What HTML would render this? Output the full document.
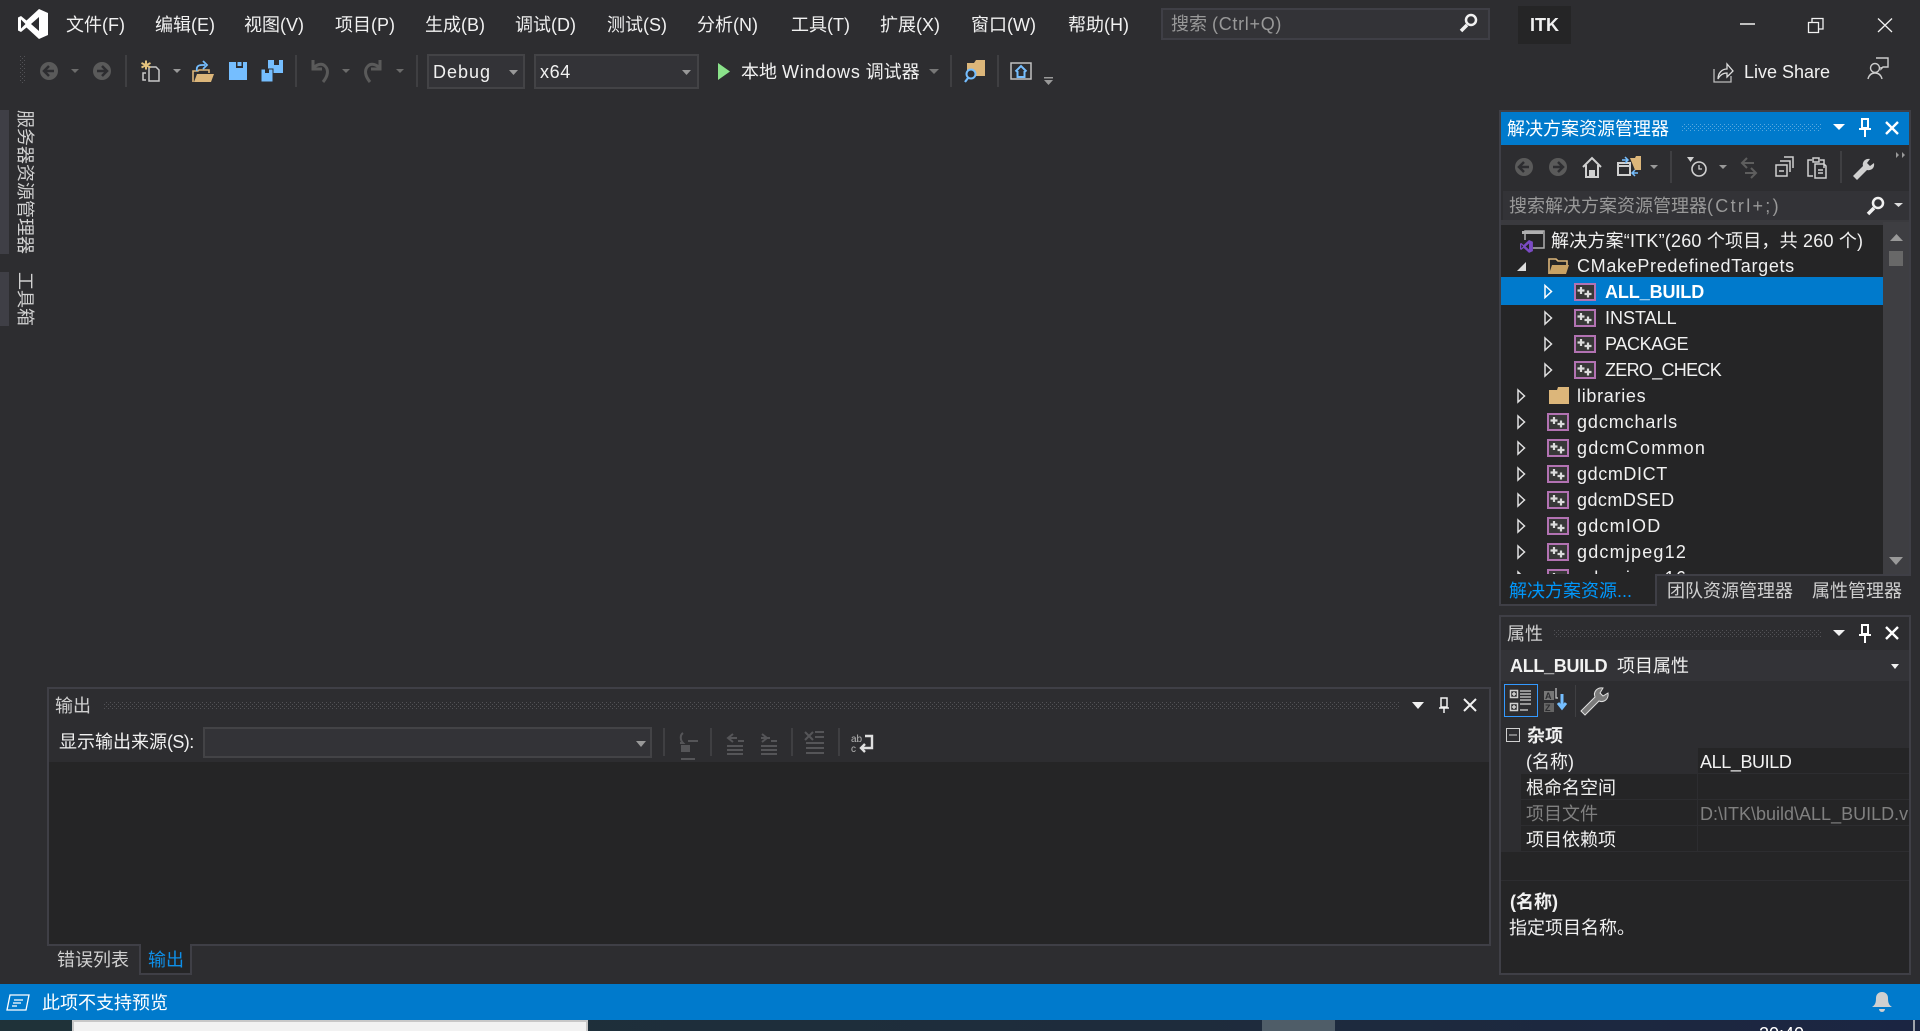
<!DOCTYPE html>
<html lang="zh-CN">
<head>
<meta charset="utf-8">
<title>ITK - Microsoft Visual Studio</title>
<style>
html,body{margin:0;padding:0;width:1920px;height:1031px;overflow:hidden;background:#2d2d30}
body{position:relative;font-family:"Liberation Sans","Noto Sans CJK SC",sans-serif;font-size:18px;color:#f1f1f1}
.b{position:absolute;box-sizing:border-box}
.t{position:absolute;line-height:26px;height:26px;white-space:nowrap;font-size:18px}
.g{color:#999}
.d{color:#d0d0d0}
.v{position:absolute;writing-mode:vertical-rl;text-orientation:sideways;font-size:18px;line-height:18px;white-space:nowrap;color:#d0d0d0;left:16px}
svg{position:absolute;left:0;top:0}
</style>
</head>
<body>
<!-- wallpaper strip -->
<div class="b" style="left:0;top:1020px;width:1920px;height:11px;background:linear-gradient(90deg,#1f3239,#1e2c3c 60%,#1b2542)"></div>
<div class="b" style="left:72px;top:1020px;width:516px;height:11px;background:#f2f2f2;border:2px solid #c8c8c8;border-bottom:0"></div>
<div class="b" style="left:1262px;top:1020px;width:73px;height:11px;background:#4f5d68"></div>
<div class="b" style="left:1913px;top:1020px;width:2px;height:11px;background:#a0a4ac"></div>
<div class="b" style="left:0;top:1020px;width:1920px;height:11px;overflow:hidden"><span class="t" style="left:1759px;top:1px;color:#fff;font-size:18px">20:40</span></div>

<!-- title search -->
<div class="b" style="left:1161px;top:8px;width:329px;height:32px;background:#333337;border:2px solid #3f3f46"></div>
<div class="b" style="left:1518px;top:6px;width:53px;height:38px;background:#252526"></div>
<!-- combos -->
<div class="b" style="left:427px;top:54px;width:98px;height:35px;background:#333337;border:2px solid #434346"></div>
<div class="b" style="left:534px;top:54px;width:165px;height:35px;background:#333337;border:2px solid #434346"></div>
<!-- left tabs -->
<div class="b" style="left:0;top:110px;width:9px;height:144px;background:#3f3f46"></div>
<div class="b" style="left:0;top:272px;width:9px;height:54px;background:#3f3f46"></div>

<!-- output panel -->
<div class="b" style="left:47px;top:687px;width:1444px;height:259px;background:#2d2d30;border:2px solid #3f3f46"></div>
<div class="b" style="left:49px;top:762px;width:1440px;height:182px;background:#252526"></div>
<div class="b" style="left:203px;top:727px;width:449px;height:31px;background:#333337;border:2px solid #434346"></div>
<div class="b" style="left:139px;top:944px;width:53px;height:31px;background:#252526;border:2px solid #3f3f46;border-top:0"></div>
<div class="b" style="left:141px;top:943px;width:49px;height:3px;background:#252526"></div>

<!-- solution explorer -->
<div class="b" style="left:1499px;top:110px;width:412px;height:496px;background:#2d2d30;border:2px solid #3f3f46"></div>
<div class="b" style="left:1501px;top:112px;width:408px;height:33px;background:#007acc"></div>
<div class="b" style="left:1503px;top:191px;width:388px;height:29px;background:#333337"></div>
<div class="b" style="left:1891px;top:191px;width:18px;height:29px;background:#333337"></div>
<div class="b" style="left:1501px;top:220px;width:408px;height:5px;background:#3a3a3e"></div>
<div class="b" style="left:1501px;top:225px;width:382px;height:349px;background:#252526"></div>
<div class="b" style="left:1883px;top:222px;width:26px;height:352px;background:#3e3e42"></div>
<div class="b" style="left:1889px;top:251px;width:14px;height:15px;background:#686868"></div>
<div class="b" style="left:1501px;top:277px;width:382px;height:28px;background:#007acc"></div>
<div class="b" style="left:1499px;top:574px;width:158px;height:32px;background:#252526;border:2px solid #3f3f46;border-top:0"></div>
<div class="b" style="left:1657px;top:574px;width:254px;height:2px;background:#3f3f46"></div>
<div class="b" style="left:1657px;top:576px;width:254px;height:30px;background:#2d2d30"></div>

<!-- properties panel -->
<div class="b" style="left:1499px;top:615px;width:412px;height:360px;background:#252526;border:2px solid #3f3f46"></div>
<div class="b" style="left:1501px;top:617px;width:408px;height:103px;background:#2d2d30"></div>
<div class="b" style="left:1501px;top:650px;width:408px;height:31px;background:#333337"></div>
<div class="b" style="left:1504px;top:684px;width:34px;height:33px;border:1px solid #3399ff;background:#2d2d30"></div>
<div class="b" style="left:1501px;top:720px;width:408px;height:28px;background:#2d2d30"></div>
<div class="b" style="left:1501px;top:748px;width:196px;height:26px;background:#2d2d30"></div>
<div class="b" style="left:1501px;top:774px;width:20px;height:77px;background:#2d2d30"></div>
<div class="b" style="left:1697px;top:748px;width:1px;height:103px;background:#2d2d30"></div>
<div class="b" style="left:1521px;top:773px;width:388px;height:1px;background:#2d2d30"></div>
<div class="b" style="left:1521px;top:799px;width:388px;height:1px;background:#2d2d30"></div>
<div class="b" style="left:1521px;top:825px;width:388px;height:1px;background:#2d2d30"></div>
<div class="b" style="left:1501px;top:851px;width:408px;height:1px;background:#2d2d30"></div>
<div class="b" style="left:1501px;top:880px;width:408px;height:1px;background:#2d2d30"></div>

<!-- status bar -->
<div class="b" style="left:0;top:984px;width:1920px;height:36px;background:#007acc"></div>

<svg width="1920" height="1031" viewBox="0 0 1920 1031" xmlns="http://www.w3.org/2000/svg">
<defs>
<pattern id="dot" width="4" height="4" patternUnits="userSpaceOnUse"><rect width="1" height="1" fill="#525256"/><rect x="2" y="2" width="1" height="1" fill="#525256"/></pattern>
<pattern id="dotb" width="4" height="4" patternUnits="userSpaceOnUse"><rect width="1" height="1" fill="#59a8de"/><rect x="2" y="2" width="1" height="1" fill="#59a8de"/></pattern>
<g id="p">
<rect x="1" y="1" width="20" height="16" fill="#383838" stroke="#b272b2" stroke-width="2"/>
<path d="M7 4v7M3.500 7.500h7M14 7.500v7M10.500 11h7" stroke="#dcdcdc" stroke-width="2.200" fill="none"/>
</g>
<g id="pin" fill="none" stroke="#fff" stroke-width="2"><path d="M-3-8h6v9h-6zM-6 2h12M0 2v8"/></g>
<path id="x" d="M-6-6L6 6M6-6L-6 6" stroke="#fff" stroke-width="2.400" fill="none"/>
<path id="vs" fill-rule="evenodd" d="M21 0L30 4V26L21 30L8.500 18.500L3 23L0 21.500V8.500L3 7L8.500 11.500ZM3 10.500V19.500L7.500 15ZM21 8L13 15L21 22Z"/>
</defs>

<!-- VS logo -->
<use href="#vs" transform="translate(18 9)" fill="#fff"/>

<!-- title search icon -->
<circle cx="1471" cy="20" r="5" fill="none" stroke="#f1f1f1" stroke-width="2.500"/>
<path d="M1467 25L1461 31" stroke="#f1f1f1" stroke-width="3.500"/>

<!-- window buttons -->
<path d="M1740 24h15" stroke="#f1f1f1" stroke-width="1.500"/>
<path d="M1808.500 22.500h10v10h-10zM1812 22v-3.500h11v10.500h-4" fill="none" stroke="#f1f1f1" stroke-width="1.300"/>
<path d="M1878 18.500L1892 32M1892 18.500L1878 32" stroke="#f1f1f1" stroke-width="1.300"/>

<!-- live share -->
<path d="M1714 69v13h17v-6" fill="none" stroke="#bbb" stroke-width="1.300"/>
<path d="M1718 79c0-6 4-10 9-10v-5l6 7l-6 6v-4c-4 0-7 2-9 6z" fill="none" stroke="#ddd" stroke-width="1.300"/>
<circle cx="1875" cy="68" r="4.500" fill="none" stroke="#ccc" stroke-width="1.400"/>
<path d="M1868 79c1-4 3-6 7-6s6 2 7 6M1876 58h12v9h-5l-2 2v-2" fill="none" stroke="#ccc" stroke-width="1.400"/>

<!-- toolbar -->
<rect x="20" y="56" width="6" height="28" fill="url(#dot)"/>
<circle cx="49" cy="71" r="9" fill="#5a5a5a"/><path d="M54 71H45M49 66l-5 5l5 5" stroke="#2d2d30" stroke-width="2.500" fill="none"/>
<polygon points="71,69 79,69 75,73" fill="#6b6b6b"/>
<circle cx="102" cy="71" r="9" fill="#5a5a5a"/><path d="M97 71H106M102 66l5 5l-5 5" stroke="#2d2d30" stroke-width="2.500" fill="none"/>
<rect x="125" y="55" width="2" height="32" fill="#3f3f42"/>
<!-- new project -->
<path d="M149 67h7l3 3v11h-10zM146 73h-3v7h3" fill="none" stroke="#c8c8c8" stroke-width="1.500"/>
<path d="M146 60.500v9M141.500 63l9 4.500M150.500 63l-9 4.500" stroke="#e3c27d" stroke-width="2"/>
<polygon points="173,69 181,69 177,73" fill="#999"/>
<!-- open -->
<path d="M193 82v-11h5l1-1h10v3" fill="none" stroke="#dcb67a" stroke-width="1.600"/>
<path d="M194 82l3-8h17l-3 8z" fill="#dcb67a"/>
<path d="M197 71c-1-4 1-6 5-6h3M203 61l4 4l-4 4" fill="none" stroke="#75beff" stroke-width="1.800"/>
<!-- save -->
<rect x="229" y="62" width="18" height="18" fill="#75beff"/><rect x="236" y="62" width="7" height="6" fill="#2d2d30"/><rect x="237.500" y="62" width="4" height="4" fill="#75beff"/>
<!-- save all -->
<rect x="268" y="60" width="15" height="13" fill="#75beff"/><rect x="274" y="60" width="5" height="5" fill="#2d2d30"/>
<rect x="261" y="69" width="12" height="13" fill="#75beff" stroke="#2d2d30" stroke-width="1"/><rect x="265" y="69" width="4" height="4" fill="#2d2d30"/>
<rect x="295" y="55" width="2" height="32" fill="#3f3f42"/>
<path d="M313 60v9h9M313 69c3-5 9-6 12-3c4 4 3 10-2 16" fill="none" stroke="#5a5a5a" stroke-width="3"/>
<polygon points="342,69 350,69 346,73" fill="#6b6b6b"/>
<path d="M380 60v9h-9M380 69c-3-5-9-6-12-3c-4 4-3 10 2 16" fill="none" stroke="#5a5a5a" stroke-width="3"/>
<polygon points="396,69 404,69 400,73" fill="#6b6b6b"/>
<rect x="416" y="55" width="2" height="32" fill="#3f3f42"/>
<polygon points="509,70 518,70 513.500,75" fill="#999"/>
<polygon points="682,70 691,70 686.500,75" fill="#999"/>
<polygon points="718,63 730,71.500 718,80" fill="#8ae28a"/>
<polygon points="929,69 939,69 934,74" fill="#777"/>
<rect x="950" y="55" width="2" height="32" fill="#3f3f42"/>
<path d="M967 63h7l2-3h9v16h-18z" fill="#dcb67a"/>
<circle cx="971" cy="74" r="4.500" fill="#2d2d30" stroke="#75beff" stroke-width="2"/><path d="M968 78l-3 4" stroke="#75beff" stroke-width="2.200"/>
<rect x="997" y="55" width="2" height="32" fill="#3f3f42"/>
<rect x="1011" y="63" width="20" height="16" fill="#2d2d30" stroke="#c0c0c0" stroke-width="1.500"/>
<path d="M1015.500 71.500l5.500-5.500l5.500 5.500M1017.500 71v6h7v-6" fill="none" stroke="#75beff" stroke-width="2"/>
<rect x="1044" y="77" width="9" height="1.500" fill="#999"/><polygon points="1044,80 1053,80 1048.500,85" fill="#999"/>

<!-- output header -->
<rect x="103" y="701" width="1297" height="8" fill="url(#dot)"/>
<polygon points="1412,702 1424,702 1418,709" fill="#f1f1f1"/>
<path d="M1441 698h6v9h-6zM1439 708h10M1444 708v5" fill="none" stroke="#f1f1f1" stroke-width="1.500"/>
<path d="M1464 699L1476 711M1476 699L1464 711" stroke="#f1f1f1" stroke-width="2"/>
<polygon points="636,741 646,741 641,747" fill="#999"/>
<g fill="#3f3f42"><rect x="663" y="728" width="2" height="28"/><rect x="710" y="728" width="2" height="28"/><rect x="791" y="728" width="2" height="28"/><rect x="838" y="728" width="2" height="28"/></g>
<g transform="translate(0 -1)">
<g fill="none" stroke="#555558" stroke-width="2">
<path d="M683 734c-3 2-3 7 0 10h-3M688 742h10M681 760h14"/>
<rect x="681" y="746" width="9" height="7" fill="#555558" stroke="none"/>
<path d="M733 735l-5 4l5 4M729 739h8M738 742h6M727 747h16M727 751h16M727 755h16"/>
<path d="M762 735l5 4l-5 4M761 739h9M771 742h6M761 747h16M761 751h16M761 755h16"/>
<path d="M805 733l8 8M813 733l-8 8M815 733h9M815 738h9M806 744h18M806 749h18M806 754h18"/>
</g>
<text x="851" y="743" font-size="10" fill="#b5b5b5" font-family="Liberation Sans">ab</text><text x="851" y="753" font-size="10" fill="#b5b5b5" font-family="Liberation Sans">c</text>
<path d="M865 737h7v12h-11M865 745l-4 4l4 4" fill="none" stroke="#e0e0e0" stroke-width="2.400"/>
</g>

<!-- solution explorer header -->
<rect x="1681" y="124" width="140" height="8" fill="url(#dotb)"/>
<polygon points="1833,124 1845,124 1839,130" fill="#fff"/>
<use href="#pin" x="1865" y="127"/>
<use href="#x" x="1892" y="128"/>
<!-- SE toolbar -->
<circle cx="1524" cy="167" r="9" fill="#5a5a5a"/><path d="M1529 167H1520M1524 162l-5 5l5 5" stroke="#2d2d30" stroke-width="2.500" fill="none"/>
<circle cx="1558" cy="167" r="9" fill="#5a5a5a"/><path d="M1553 167H1562M1558 162l5 5l-5 5" stroke="#2d2d30" stroke-width="2.500" fill="none"/>
<path d="M1583 167l9-9l9 9M1586 165v12h12v-12" fill="none" stroke="#d0d0d0" stroke-width="2"/><rect x="1589" y="170" width="6" height="7" fill="#d0d0d0"/>
<path d="M1618 163h12v12h-12zM1618 166h12" fill="none" stroke="#d0d0d0" stroke-width="2"/>
<path d="M1630 158h5l1-2h5v14h-6" fill="#dcb67a"/><path d="M1622 160h5M1625 157l3 3l-3 3M1638 173h-5M1635 176l-3-3l3-3" stroke="#75beff" stroke-width="1.500" fill="none"/>
<polygon points="1650,165 1658,165 1654,169" fill="#999"/>
<rect x="1670" y="151" width="2" height="32" fill="#3f3f42"/>
<circle cx="1699" cy="169" r="7" fill="none" stroke="#d0d0d0" stroke-width="1.600"/><path d="M1699 165v4h3" stroke="#d0d0d0" stroke-width="1.300" fill="none"/><polygon points="1687,157 1694,157 1690.500,162" fill="#d0d0d0"/>
<polygon points="1719,165 1727,165 1723,169" fill="#999"/>
<path d="M1754 163h-11M1747 158l-5 5l5 5M1745 173h11M1751 168l5 5l-5 5" fill="none" stroke="#5e5e5e" stroke-width="2"/>
<path d="M1776 165h11v11h-11zM1780 161h10v11M1784 157h9v11M1779 171h5" fill="none" stroke="#d0d0d0" stroke-width="1.500"/>
<path d="M1812 160h-4v16h5M1820 160h4v8M1813 158h6v4h-6zM1815 164h9l2 2v12h-11zM1818 170h5M1818 173h5" fill="none" stroke="#d0d0d0" stroke-width="1.500"/>
<rect x="1840" y="151" width="2" height="32" fill="#3f3f42"/>
<path d="M1853 176l10-10c-1-4 2-8 7-7l-3 4l3 3l4-3c1 5-3 8-7 7l-10 10z" fill="#d0d0d0"/>
<path d="M1896 152l3 3l-3 3zM1902 152l3 3l-3 3z" fill="#999"/>
<!-- SE search -->
<circle cx="1878" cy="203" r="5" fill="none" stroke="#f1f1f1" stroke-width="2.500"/><path d="M1874 208L1868 214" stroke="#f1f1f1" stroke-width="3.500"/>
<polygon points="1894,203 1903,203 1898.500,207" fill="#ddd"/>
<!-- scroll arrows -->
<polygon points="1890,241 1903,241 1896.500,234" fill="#999"/>
<polygon points="1889,557 1903,557 1896,565" fill="#999"/>
<!-- tree icons -->
<path d="M1525 240v-9h19v17h-11" fill="none" stroke="#b0b0b0" stroke-width="1.500"/><rect x="1522" y="231" width="21" height="3" fill="#b0b0b0"/>
<use href="#vs" transform="translate(1520 240) scale(.43)" fill="#7b4bc4"/>
<polygon points="1526,262 1526,271 1517,271" fill="#ddd"/>
<path d="M1549 274v-15h7l2 2h9v4" fill="none" stroke="#dcb67a" stroke-width="1.600"/><path d="M1552 265h17l-3 9h-17z" fill="#c9a264"/>
<g fill="none" stroke="#e0e0e0" stroke-width="1.500">
<polygon points="1545,285.500 1551.500,291.500 1545,297.500" stroke="#fff"/>
<polygon points="1545,312 1551.500,318 1545,324"/>
<polygon points="1545,338 1551.500,344 1545,350"/>
<polygon points="1545,364 1551.500,370 1545,376"/>
<polygon points="1518,390 1524.500,396 1518,402"/>
<polygon points="1518,416 1524.500,422 1518,428"/>
<polygon points="1518,442 1524.500,448 1518,454"/>
<polygon points="1518,468 1524.500,474 1518,480"/>
<polygon points="1518,494 1524.500,500 1518,506"/>
<polygon points="1518,520 1524.500,526 1518,532"/>
<polygon points="1518,546 1524.500,552 1518,558"/>
</g>
<use href="#p" x="1574" y="283"/><use href="#p" x="1574" y="309"/><use href="#p" x="1574" y="335"/><use href="#p" x="1574" y="361"/>
<path d="M1549 390h8l1-3h11v17h-20z" fill="#dcb67a"/>
<use href="#p" x="1547" y="413"/><use href="#p" x="1547" y="439"/><use href="#p" x="1547" y="465"/><use href="#p" x="1547" y="491"/><use href="#p" x="1547" y="517"/><use href="#p" x="1547" y="543"/>
<clipPath id="c"><rect x="1501" y="560" width="382" height="14"/></clipPath>
<g clip-path="url(#c)"><use href="#p" x="1547" y="569"/><polygon points="1518,572 1524.500,578 1518,584" fill="none" stroke="#e0e0e0" stroke-width="1.500"/></g>

<!-- properties header -->
<rect x="1553" y="629" width="268" height="8" fill="url(#dot)"/>
<polygon points="1833,630 1845,630 1839,636" fill="#f1f1f1"/>
<use href="#pin" x="1865" y="633"/>
<use href="#x" x="1892" y="633"/>
<polygon points="1891,664 1899,664 1895,669" fill="#f1f1f1"/>
<!-- props toolbar -->
<g fill="none" stroke="#d0d0d0" stroke-width="1.500"><rect x="1510.500" y="690.500" width="7" height="7"/><rect x="1510.500" y="703.500" width="7" height="7"/><path d="M1512 694h4M1514 692v4M1512 707h4M1514 705v4"/><path d="M1520 691h11M1520 694h11M1520 697h11M1520 700h11M1520 704h11M1520 710h8" stroke="#b8b8b8"/></g>
<rect x="1544" y="691" width="10" height="9" fill="#777"/><rect x="1544" y="703" width="10" height="9" fill="#666"/>
<text x="1545" y="699" font-size="9" font-weight="bold" fill="#2d2d30" font-family="Liberation Sans">A</text>
<text x="1545" y="711" font-size="9" font-weight="bold" fill="#2d2d30" font-family="Liberation Sans">Z</text>
<path d="M1556 688v10h2" fill="none" stroke="#ccc" stroke-width="1.200"/>
<path d="M1562 694v13M1558 703l4 5l4-5" stroke="#75beff" stroke-width="3" fill="none"/>
<rect x="1575" y="685" width="1" height="32" fill="#3f3f42"/>
<path transform="translate(-3 -1)" d="M1584 712l14-14c-2-5 2-10 8-9l-3 5l3 3l5-3c1 6-4 10-9 8l-14 14z" fill="#7a7a7a" stroke="#e0e0e0" stroke-width="1"/>
<rect x="1506.500" y="728.500" width="13" height="13" fill="none" stroke="#d0d0d0" stroke-width="1"/><path d="M1509 735h8" stroke="#d0d0d0"/>

<!-- status icon & bell -->
<path d="M10 995h19l-3 15H7zM14 1000h9M13 1003h8M12 1006h5" fill="none" stroke="#fff" stroke-width="1.300"/>
<path d="M1872 1007c3-2 4-4 4-9c0-3 2-6 6-6s6 3 6 6c0 5 1 7 4 9z" fill="#d0d0d0"/><path d="M1879 1009h6a3 3 0 0 1-6 0z" fill="#d0d0d0"/>
</svg>

<!-- menu -->
<span class="t" style="left:66px;top:12px">文件(F)</span>
<span class="t" style="left:155px;top:12px">编辑(E)</span>
<span class="t" style="left:244px;top:12px">视图(V)</span>
<span class="t" style="left:335px;top:12px">项目(P)</span>
<span class="t" style="left:425px;top:12px">生成(B)</span>
<span class="t" style="left:515px;top:12px">调试(D)</span>
<span class="t" style="left:607px;top:12px">测试(S)</span>
<span class="t" style="left:697px;top:12px">分析(N)</span>
<span class="t" style="left:791px;top:12px">工具(T)</span>
<span class="t" style="left:880px;top:12px">扩展(X)</span>
<span class="t" style="left:971px;top:12px">窗口(W)</span>
<span class="t" style="left:1068px;top:12px">帮助(H)</span>
<span class="t g" style="left:1171px;top:11px">搜索 <span style="letter-spacing:.7px">(Ctrl+Q)</span></span>
<span class="t" style="left:1530px;top:12px;font-weight:bold">ITK</span>

<!-- toolbar text -->
<span class="t" style="left:433px;top:59px;letter-spacing:1px">Debug</span>
<span class="t" style="left:540px;top:59px;letter-spacing:.6px">x64</span>
<span class="t" style="left:741px;top:59px">本地 <span style="letter-spacing:.8px">Windows</span> 调试器</span>
<span class="t" style="left:1744px;top:59px">Live Share</span>

<!-- left tabs -->
<span class="v" style="top:110px">服务器资源管理器</span>
<span class="v" style="top:272px">工具箱</span>

<!-- output -->
<span class="t d" style="left:55px;top:693px">输出</span>
<span class="t" style="left:59px;top:729px">显示输出来源<span style="letter-spacing:-.6px">(S):</span></span>
<span class="t d" style="left:57px;top:947px">错误列表</span>
<span class="t" style="left:148px;top:947px;color:#0e8fe8">输出</span>

<!-- solution explorer -->
<span class="t" style="left:1507px;top:116px;color:#fff">解决方案资源管理器</span>
<span class="t g" style="left:1509px;top:193px">搜索解决方案资源管理器<span style="letter-spacing:2.300px">(Ctrl+;)</span></span>
<span class="t" style="left:1551px;top:228px;letter-spacing:.2px">解决方案“ITK”(260 个项目，共 260 个)</span>
<span class="t" style="left:1577px;top:253px;letter-spacing:.67px">CMakePredefinedTargets</span>
<span class="t" style="left:1605px;top:279px;font-weight:bold;color:#fff;letter-spacing:-.1px">ALL_BUILD</span>
<span class="t" style="left:1605px;top:305px">INSTALL</span>
<span class="t" style="left:1605px;top:331px;letter-spacing:-.35px">PACKAGE</span>
<span class="t" style="left:1605px;top:357px;letter-spacing:-.7px">ZERO_CHECK</span>
<span class="t" style="left:1577px;top:383px;letter-spacing:.7px">libraries</span>
<span class="t" style="left:1577px;top:409px;letter-spacing:.9px">gdcmcharls</span>
<span class="t" style="left:1577px;top:435px;letter-spacing:1.200px">gdcmCommon</span>
<span class="t" style="left:1577px;top:461px;letter-spacing:.6px">gdcmDICT</span>
<span class="t" style="left:1577px;top:487px;letter-spacing:.45px">gdcmDSED</span>
<span class="t" style="left:1577px;top:513px;letter-spacing:1.200px">gdcmIOD</span>
<span class="t" style="left:1577px;top:539px;letter-spacing:1.200px">gdcmjpeg12</span>
<div class="b" style="left:1501px;top:560px;width:382px;height:14px;overflow:hidden"><span class="t" style="left:76px;top:5px;letter-spacing:1.200px">gdcmjpeg16</span></div>
<span class="t" style="left:1509px;top:578px;color:#0097fb">解决方案资源...</span>
<span class="t d" style="left:1667px;top:578px">团队资源管理器</span>
<span class="t d" style="left:1812px;top:578px">属性管理器</span>

<!-- properties -->
<span class="t d" style="left:1507px;top:621px">属性</span>
<span class="t" style="left:1510px;top:653px;font-weight:bold;letter-spacing:-.3px">ALL_BUILD</span>
<span class="t" style="left:1617px;top:653px">项目属性</span>
<span class="t" style="left:1527px;top:723px;font-weight:bold">杂项</span>
<span class="t" style="left:1526px;top:749px">(名称)</span>
<span class="t" style="left:1700px;top:749px;letter-spacing:-.4px">ALL_BUILD</span>
<span class="t" style="left:1526px;top:775px">根命名空间</span>
<span class="t" style="left:1526px;top:801px;color:#808080">项目文件</span>
<div class="b" style="left:1697px;top:801px;width:211px;height:26px;overflow:hidden"><span class="t" style="left:3px;top:0;color:#808080">D:\ITK\build\ALL_BUILD.vcxproj</span></div>
<span class="t" style="left:1526px;top:827px">项目依赖项</span>
<span class="t" style="left:1510px;top:889px;font-weight:bold">(名称)</span>
<span class="t" style="left:1509px;top:915px">指定项目名称。</span>

<!-- status text -->
<span class="t" style="left:42px;top:990px;color:#fff">此项不支持预览</span>
</body>
</html>
